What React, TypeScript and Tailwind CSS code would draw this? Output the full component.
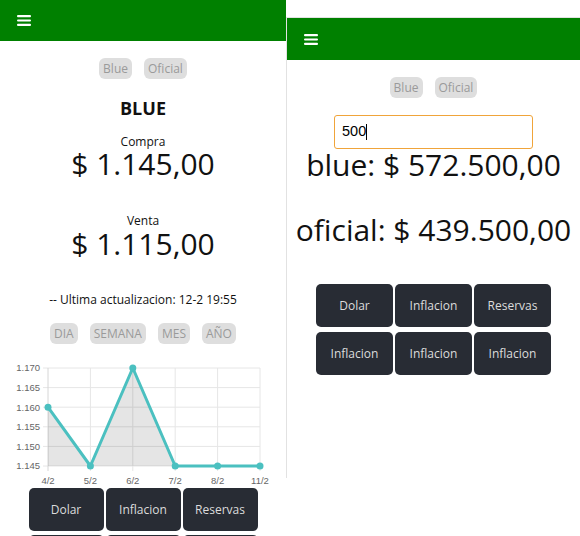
import React from "react";

const Bars = () => (
  <svg width="14" height="11" viewBox="0 0 14 11" className="block">
    <rect x="0" y="0" width="14" height="2.2" rx="1" fill="white" />
    <rect x="0" y="4.4" width="14" height="2.2" rx="1" fill="white" />
    <rect x="0" y="8.8" width="14" height="2.2" rx="1" fill="white" />
  </svg>
);

const Chip = ({ children }: { children: React.ReactNode }) => (
  <span className="px-1 h-[21px] leading-[21px] rounded-[6px] bg-[#dedede] text-[#9a9a9a] text-[12px]">
    {children}
  </span>
);

const Btn = ({ label }: { label: string }) => (
  <button className="h-[43px] rounded-[5px] bg-[#282c34] text-[#dcdcdc] text-[12px]">{label}</button>
);

const BUTTONS = ["Dolar", "Inflacion", "Reservas", "Inflacion", "Inflacion", "Inflacion"];

// datos del grafico (blue, ultimos dias)
const DATA = [
  { label: "4/2", v: 1.16 },
  { label: "5/2", v: 1.145 },
  { label: "6/2", v: 1.17 },
  { label: "7/2", v: 1.145 },
  { label: "8/2", v: 1.145 },
  { label: "11/2", v: 1.145 },
];
const TICKS = ["1.170", "1.165", "1.160", "1.155", "1.150", "1.145"];

function Chart() {
  const x0 = 48, x1 = 260, yTop = 12, yBot = 110;
  const step = (x1 - x0) / (DATA.length - 1);
  const px = (i: number) => x0 + i * step;
  const py = (v: number) => yBot - ((v - 1.145) / 0.025) * (yBot - yTop);
  const line = DATA.map((d, i) => `${px(i)},${py(d.v)}`).join(" ");
  const area = `${x0},${yBot} ${line} ${x1},${yBot}`;

  return (
    <svg width="286" height="132" className="block shrink-0 mt-[12px]">
      {TICKS.map((t, i) => {
        const y = yTop + (i * (yBot - yTop)) / 5;
        return (
          <g key={t}>
            <line x1={43} x2={x1} y1={y} y2={y} stroke="#e6e6e6" strokeWidth="1" />
            <text x={40} y={y + 3.3} textAnchor="end" fontSize="9.5" fill="#666" fontFamily="Liberation Sans, Arial, sans-serif">
              {t}
            </text>
          </g>
        );
      })}
      {DATA.map((d, i) => (
        <g key={d.label}>
          <line x1={px(i)} x2={px(i)} y1={yTop} y2={yBot + 5} stroke={i === 0 ? "#d6d6d6" : "#e6e6e6"} strokeWidth="1" />
          <text x={px(i)} y={128} textAnchor="middle" fontSize="9.5" fill="#666" fontFamily="Liberation Sans, Arial, sans-serif">
            {d.label}
          </text>
        </g>
      ))}
      <polygon points={area} fill="rgba(0,0,0,0.1)" />
      <polyline points={line} fill="none" stroke="#4bc0c0" strokeWidth="3" strokeLinejoin="round" />
      {DATA.map((d, i) => (
        <circle key={i} cx={px(i)} cy={py(d.v)} r="3.5" fill="#4bc0c0" />
      ))}
    </svg>
  );
}

export default function App() {
  return (
    <div className="w-[580px] h-[536px] overflow-hidden bg-white flex font-['Open_Sans',sans-serif] text-[#111]">
      {/* cotizaciones */}
      <div className="w-[286px] shrink-0 flex flex-col items-center">
        <div className="w-full h-[41px] shrink-0 bg-[#008000] flex items-center pl-[17px]">
          <Bars />
        </div>
        <div className="mt-[17px] flex gap-3">
          <Chip>Blue</Chip>
          <Chip>Oficial</Chip>
        </div>
        <div className="mt-[16px] leading-[26px] text-[18px] font-bold">BLUE</div>
        <div className="mt-[13px] leading-[16px] text-[12px]">Compra</div>
        <div className="leading-[28px] text-[30px]">$ 1.145,00</div>
        <div className="mt-[35px] leading-[16px] text-[12px]">Venta</div>
        <div className="mt-[1px] leading-[28px] text-[30px]">$ 1.115,00</div>
        <div className="mt-[34px] leading-[16px] text-[12px]">-- Ultima actualizacion: 12-2 19:55</div>
        <div className="mt-[15px] flex gap-3">
          <Chip>DIA</Chip>
          <Chip>SEMANA</Chip>
          <Chip>MES</Chip>
          <Chip>AÑO</Chip>
        </div>
        <Chart />
        <div className="grid grid-cols-3 gap-x-[2px] gap-y-1 w-[229px] shrink-0">
          {BUTTONS.map((b, i) => (
            <Btn key={i} label={b} />
          ))}
        </div>
      </div>

      {/* conversor */}
      <div className="flex-1 mt-[17px] h-[461px] border-l border-t border-[#e2e2e2] flex flex-col items-center">
        <div className="w-full h-[42px] shrink-0 bg-[#008000] flex items-center pl-[17px]">
          <Bars />
        </div>
        <div className="mt-[17px] flex gap-3">
          <Chip>Blue</Chip>
          <Chip>Oficial</Chip>
        </div>
        <div className="mt-[17px] w-[199px] h-[34px] shrink-0 border-[1.5px] border-[#f0a43a] rounded-[3px] flex items-center pl-[7px] font-['Liberation_Sans',Arial,sans-serif] text-[14.5px] text-black">
          500<span className="inline-block w-px h-[16px] bg-black" />
        </div>
        <div className="mt-[2px] leading-[28px] text-[30px] whitespace-nowrap">blue: $ 572.500,00</div>
        <div className="mt-[37px] leading-[28px] text-[30px] whitespace-nowrap">oficial: $ 439.500,00</div>
        <div className="mt-[40px] grid grid-cols-3 gap-x-[2px] gap-y-[5px] w-[235px] shrink-0">
          {BUTTONS.map((b, i) => (
            <Btn key={i} label={b} />
          ))}
        </div>
      </div>
    </div>
  );
}
